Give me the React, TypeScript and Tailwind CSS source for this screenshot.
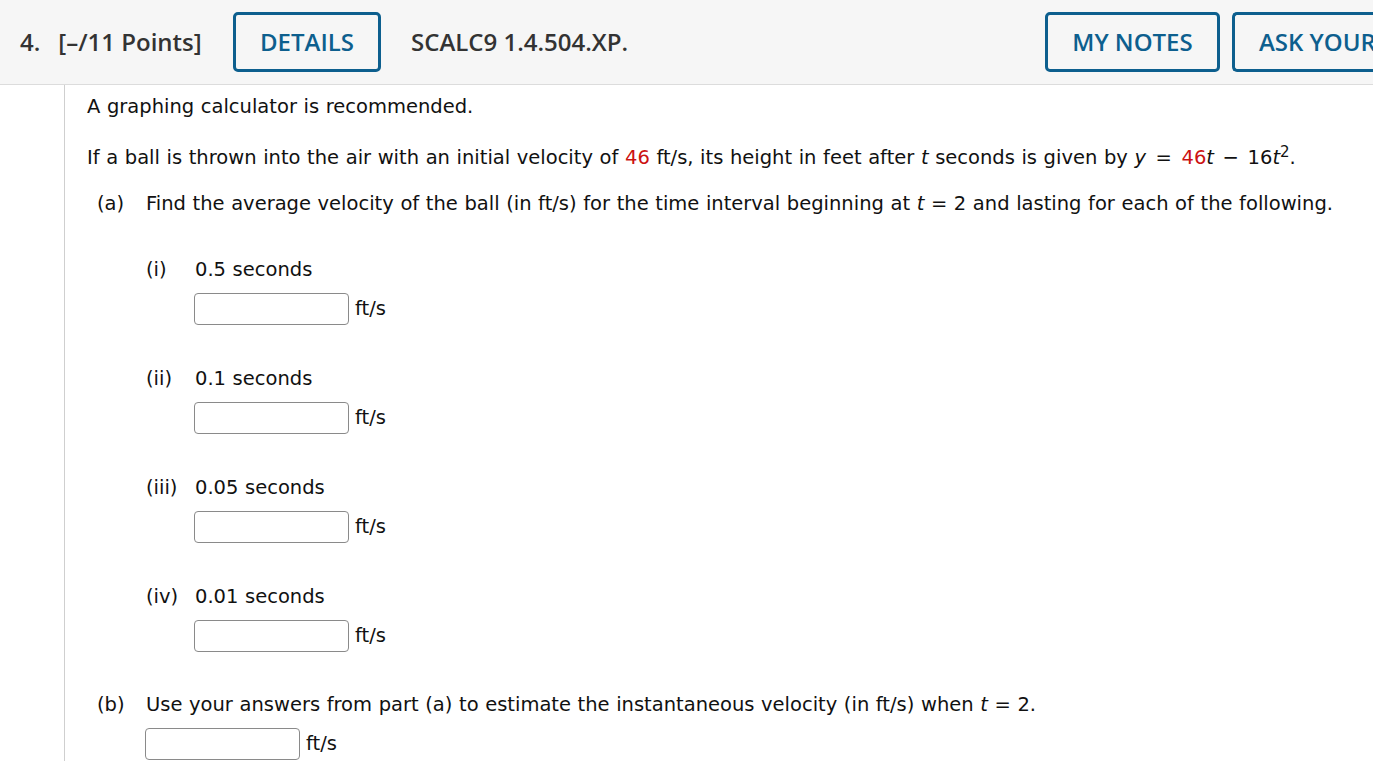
import React from "react";

const body = { fontFamily: '"DejaVu Sans", Verdana, sans-serif', wordSpacing: "0.4px" };

function Answer({ indent }: { indent: string }) {
  return (
    <div className={`flex items-center ${indent} mt-[11px]`}>
      <div className="w-[155px] h-[32px] border border-[#8a8a8a] rounded-[4px] bg-white" />
      <span className="ml-[6px]">ft/s</span>
    </div>
  );
}

function SubPart({ label, text }: { label: string; text: string }) {
  return (
    <div className="mt-[42px]">
      <div className="flex items-center h-[24px] pl-[59px]">
        <span className="w-[49px]">{label}</span>
        <span>{text}</span>
      </div>
      <Answer indent="pl-[107px]" />
    </div>
  );
}

export default function App() {
  return (
    <div className="w-[1373px] h-[761px] overflow-hidden bg-white text-[#111]">
      <div
        className="flex items-center h-[85px] bg-[#f6f6f6] border-b border-[#dcdcdc] pl-[20px] text-[24px] font-semibold text-[#333]"
        style={{ fontFamily: '"Open Sans", sans-serif' }}
      >
        <span className="whitespace-nowrap w-[183px] shrink-0">
          4.<span className="ml-[18px]">[–/11 Points]</span>
        </span>
        <div className="ml-[30px] w-[148px] h-[60px] border-[3px] border-[#0d5f8e] rounded-[5px] flex items-center justify-center text-[#0d5f8e] shrink-0">
          DETAILS
        </div>
        <span className="ml-[30px] whitespace-nowrap">SCALC9 1.4.504.XP.</span>
        <div className="ml-auto flex gap-[12px] shrink-0">
          <div className="w-[175px] h-[60px] border-[3px] border-[#0d5f8e] rounded-[5px] flex items-center justify-center text-[#0d5f8e] shrink-0">
            MY NOTES
          </div>
          <div className="w-[175px] h-[60px] border-[3px] border-[#0d5f8e] border-r-0 rounded-l-[5px] flex items-center pl-[24px] text-[#0d5f8e] shrink-0 -mr-[34px] overflow-hidden whitespace-nowrap">
            ASK YOUR
          </div>
        </div>
      </div>
      <div className="flex h-[676px]">
        <div className="w-[65px] border-r border-[#cfcfcf] shrink-0" />
        <div className="pl-[22px] pt-[10px] text-[19.5px] leading-[24px] whitespace-nowrap" style={body}>
          <p>A graphing calculator is recommended.</p>
          <p className="mt-[27px]">
            If a ball is thrown into the air with an initial velocity of{" "}
            <span className="text-[#cc1111]">46</span> ft/s, its height in feet after <i>t</i> seconds is
            given by <i>y</i>
            <span className="mx-[3px]"> = </span>
            <span className="text-[#cc1111]">46</span>
            <i>t</i>
            <span className="mx-[2px]"> − </span>16<i>t</i>
            <sup className="text-[15px]">2</sup>.
          </p>
          <div className="mt-[22px] flex pl-[10px]">
            <span className="w-[49px]">(a)</span>
            <span>
              Find the average velocity of the ball (in ft/s) for the time interval beginning at <i>t</i> = 2
              and lasting for each of the following.
            </span>
          </div>
          <SubPart label="(i)" text="0.5 seconds" />
          <SubPart label="(ii)" text="0.1 seconds" />
          <SubPart label="(iii)" text="0.05 seconds" />
          <SubPart label="(iv)" text="0.01 seconds" />
          <div className="mt-[41px]">
            <div className="flex pl-[10px]">
              <span className="w-[49px]">(b)</span>
              <span>
                Use your answers from part (a) to estimate the instantaneous velocity (in ft/s) when <i>t</i> = 2.
              </span>
            </div>
            <Answer indent="pl-[58px]" />
          </div>
        </div>
      </div>
    </div>
  );
}
